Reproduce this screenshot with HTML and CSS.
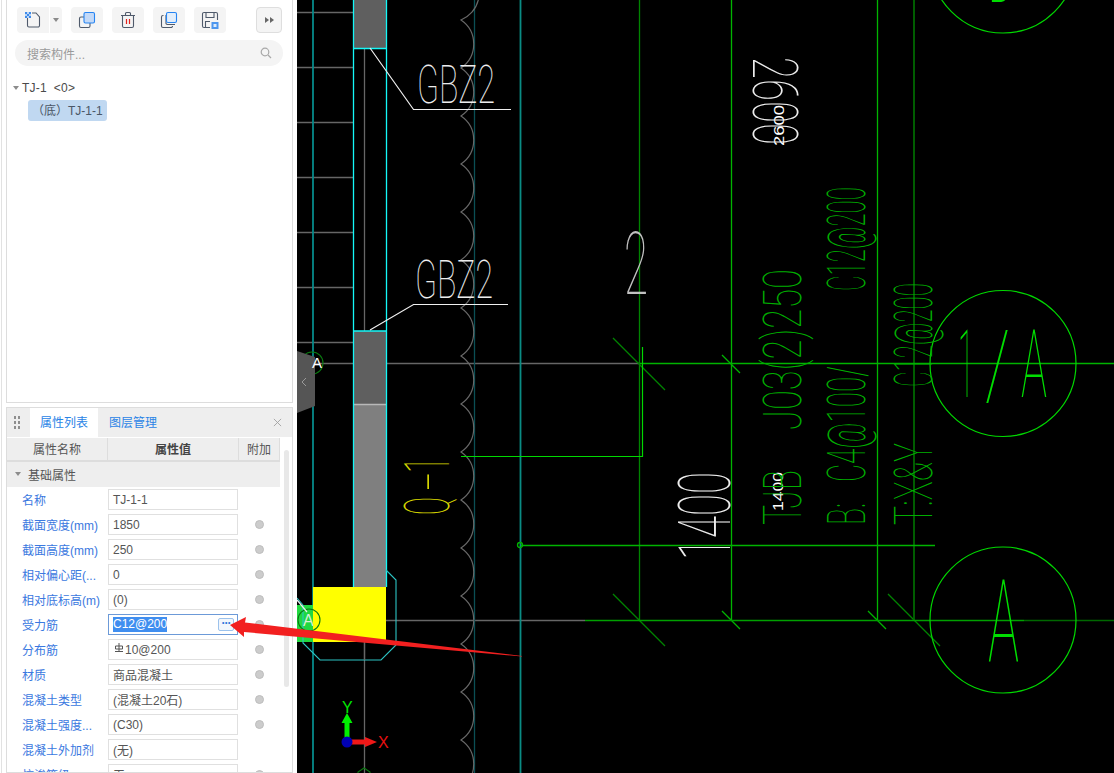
FILE: index.html
```html
<!DOCTYPE html>
<html lang="zh">
<head>
<meta charset="utf-8">
<title>构件属性</title>
<link rel="stylesheet" href="styles.css">
</head>
<body>
<div class="app">
  <aside class="side">
    <div class="frame">
      <section class="tree-panel">
        <div class="toolbar">
          <div class="split">
            <button class="tool tool-main" title="新建">
              <svg class="ico" viewBox="0 0 18 18"><path class="i-dark" d="M3.500 5v9.500a1.500 1.500 0 0 0 1.500 1.500h9a1.500 1.500 0 0 0 1.500-1.500V6L12 2H8"/><path class="i-check" d="M1 1h2v2H1zM5 1h2v2H5zM3 3h2v2H3zM1 5h2v2H1zM5 5h2v2H5z"/><path class="i-checklite" d="M3 1h2v2H3zM1 3h2v2H1zM5 3h2v2H5zM3 5h2v2H3z"/></svg>
            </button>
            <button class="tool tool-drop"><span class="caret-down"></span></button>
          </div>
          <button class="tool"><svg class="ico" viewBox="0 0 18 18"><path class="i-dark" d="M6 6H3a1.500 1.500 0 0 0-1.500 1.500V15A1.500 1.500 0 0 0 3 16.500h7.500A1.500 1.500 0 0 0 12 15v-3"/><rect class="i-blue" x="6" y="1.500" width="10.500" height="10.500" rx="1.500"/></svg></button>
          <button class="tool"><svg class="ico" viewBox="0 0 18 18"><path class="i-dark" d="M2 4.500h14M6.500 4.500V2.500a1 1 0 0 1 1-1h3a1 1 0 0 1 1 1v2M3.500 4.500V15A1.500 1.500 0 0 0 5 16.500h8a1.500 1.500 0 0 0 1.500-1.500V4.500"/><path class="i-red" d="M7.500 8v5M10.500 8v5"/></svg></button>
          <button class="tool"><svg class="ico" viewBox="0 0 18 18"><path class="i-dark" d="M3.500 4.500H3A1.500 1.500 0 0 0 1.500 6v9A1.500 1.500 0 0 0 3 16.500h8A1.500 1.500 0 0 0 12.500 15M6 4v7.500A1.500 1.500 0 0 0 7.500 13.500H15"/><rect class="i-pale" x="6.500" y="1.500" width="10" height="10" rx="1.500"/></svg></button>
          <button class="tool"><svg class="ico" viewBox="0 0 18 18"><path class="i-dark" d="M9 16.500H3A1.500 1.500 0 0 1 1.500 15V3A1.500 1.500 0 0 1 3 1.500h12A1.500 1.500 0 0 1 16.500 3v6M5 2v4.500h8V2M4.500 16V10.500H9"/><rect class="i-fillblue" x="10.500" y="11" width="7" height="7"/><rect class="i-white" x="12.500" y="13" width="3" height="3"/></svg></button>
          <button class="tool tool-more"><span class="tri"></span><span class="tri"></span></button>
        </div>
        <div class="search">
          <span class="search-text">搜索构件...</span>
          <svg class="search-ico" viewBox="0 0 12 12"><circle cx="5" cy="5" r="3.800"/><path d="M8 8l3 3"/></svg>
        </div>
        <div class="tree">
          <div class="tree-root"><span class="caret-small"></span><span>TJ-1&nbsp;&nbsp;&lt;0&gt;</span></div>
          <div class="tree-leaf">（底）TJ-1-1</div>
        </div>
      </section>

      <section class="prop-panel">
        <header class="prop-head">
          <span class="grip"></span>
          <span class="tab tab-on">属性列表</span>
          <span class="tab">图层管理</span>
          <svg class="close" viewBox="0 0 10 10"><path d="M1 1l8 8M9 1l-8 8"/></svg>
        </header>
        <div class="prop-body">
          <div class="prop-table">
            <div class="t-head">
              <span>属性名称</span><span class="t-strong">属性值</span><span>附加</span>
            </div>
            <div class="t-group"><span class="caret-small"></span>基础属性</div>
            <div class="t-row"><span class="t-label">名称</span><span class="t-input">TJ-1-1</span><span></span></div>
            <div class="t-row"><span class="t-label">截面宽度(mm)</span><span class="t-input">1850</span><span class="dot"></span></div>
            <div class="t-row"><span class="t-label">截面高度(mm)</span><span class="t-input">250</span><span class="dot"></span></div>
            <div class="t-row"><span class="t-label">相对偏心距(...</span><span class="t-input">0</span><span class="dot"></span></div>
            <div class="t-row"><span class="t-label">相对底标高(m)</span><span class="t-input">(0)</span><span class="dot"></span></div>
            <div class="t-row"><span class="t-label">受力筋</span><span class="t-input t-focus"><span class="sel">C12@200</span><span class="more-btn">···</span></span><span class="dot"></span></div>
            <div class="t-row"><span class="t-label">分布筋</span><span class="t-input"><svg class="rebar" viewBox="0 0 10 10"><path d="M1.500 3h7v3h-7zM5 0v8M1 8.500h8"/></svg>10@200</span><span class="dot"></span></div>
            <div class="t-row"><span class="t-label">材质</span><span class="t-input">商品混凝土</span><span class="dot"></span></div>
            <div class="t-row"><span class="t-label">混凝土类型</span><span class="t-input">(混凝土20石)</span><span class="dot"></span></div>
            <div class="t-row"><span class="t-label">混凝土强度...</span><span class="t-input">(C30)</span><span class="dot"></span></div>
            <div class="t-row"><span class="t-label">混凝土外加剂</span><span class="t-input">(无)</span><span></span></div>
            <div class="t-row"><span class="t-label">抗渗等级</span><span class="t-input">无</span><span class="dot"></span></div>
          </div>
          <div class="scrollbar"></div>
        </div>
      </section>
    </div>
  </aside>

  <main class="canvas">
    <svg class="drawing" viewBox="297 0 817 773" width="817" height="773">
      <path class="s-grey" d="M297 12.500H353M297 67.500H353M297 122.500H353M297 177.500H353M297 232.500H353M297 287.500H353M297 342.500H353"/>
      <path class="s-grey" d="M364.500 48V331M364.500 642V773M297 363.500H640M297 620.500H585"/>
      <path class="s-teal" d="M313 0V773"/>
      <path class="s-teal2" d="M520.500 0V773"/>
      <path class="s-dteal" d="M474.500 0V773"/>
      <path class="s-cloud" d="M470 -28A29 29 0 0 1 461 20A29 29 0 0 1 461 68A29 29 0 0 1 461 116A29 29 0 0 1 461 164A29 29 0 0 1 461 212A29 29 0 0 1 461 260A29 29 0 0 1 461 308A29 29 0 0 1 461 356A29 29 0 0 1 461 404A29 29 0 0 1 461 452A29 29 0 0 1 461 500A29 29 0 0 1 461 548A29 29 0 0 1 461 596A29 29 0 0 1 461 644A29 29 0 0 1 461 692A29 29 0 0 1 461 740A29 29 0 0 1 461 788"/>
      <rect class="f-col" x="354" y="0" width="32" height="48"/>
      <rect class="f-col" x="354" y="331" width="32" height="73"/>
      <rect class="f-col2" x="354" y="404" width="32" height="183"/>
      <path class="s-lite" d="M354 404.500H386"/>
      <path class="s-cyan" d="M353.500 0V587M386.500 0V587M354 48.500H386M354 331H386"/>
      <circle class="s-dgreen" cx="312" cy="363" r="11"/>
      <rect class="f-green" x="297" y="605" width="16" height="37"/>
      <rect class="f-yellow" x="313" y="587" width="73" height="55"/>
      <path class="s-thincyan" d="M386 570L396 580V645L381 660H320L303 643V630M297 598L303 605M303 605V642"/>
      <path class="s-grey" d="M364.500 642V660"/>
      <circle class="s-dgreen" cx="309" cy="620" r="11"/>
      <path class="s-white" d="M297 600L307 612"/>
      <text class="cad-ui" x="303" y="626" font-size="16">A</text>
      <path class="s-white" d="M370 48L413.500 109.500H511M370 330L413.500 304.500H508"/>
      <text class="cad c-white" x="417" y="103" font-size="53" textLength="78" lengthAdjust="spacingAndGlyphs">GBZ2</text>
      <text class="cad c-white" x="415" y="298" font-size="53" textLength="78" lengthAdjust="spacingAndGlyphs">GBZ2</text>
      <path class="s-g1" d="M639.500 0V620M613 338L665 390M613 594L665 646M888 594L940 646"/>
      <path class="s-g2" d="M731.500 0V620M877.500 0V620M722 355L740 373M722 611L740 629M868 611L886 629"/>
      <path class="s-g3" d="M914 0V620"/>
      <path class="s-g2" d="M640 363.500H1114M521 545.500H935"/>
      <path class="s-g4" d="M585 620.500H1024"/>
      <path class="s-g5" d="M1024 620.500H1114"/>
      <path class="s-g6" d="M642.500 347V456.500H461"/>
      <circle class="s-g2" cx="520" cy="545" r="2.500"/>
      <circle class="s-g6" cx="1003" cy="-40" r="73"/>
      <circle class="s-g6" cx="1003" cy="363.500" r="73"/>
      <circle class="s-g6" cx="1003" cy="620" r="73"/>
      <path class="s-dgreen" d="M358 773V772L364 768L370 772V773"/>
      <text class="cad c-lg" x="988" y="2" font-size="94" textLength="24" lengthAdjust="spacingAndGlyphs">B</text>
      <text class="cad c-lg" x="958" y="397" font-size="94" textLength="16" lengthAdjust="spacingAndGlyphs">1</text>
      <text class="cad c-lg" x="985" y="397" font-size="94" textLength="25" lengthAdjust="spacingAndGlyphs">/</text>
      <text class="cad c-lg" x="1021" y="397" font-size="94" textLength="26" lengthAdjust="spacingAndGlyphs">A</text>
      <text class="cad c-lg" x="988" y="661" font-size="115" textLength="31" lengthAdjust="spacingAndGlyphs">A</text>
      <text class="cad c-grey" x="624" y="294" font-size="88" textLength="24" lengthAdjust="spacingAndGlyphs">2</text>
      <text class="cad c-white" transform="translate(753 57) rotate(90)" font-size="63" textLength="88" lengthAdjust="spacingAndGlyphs">2600</text>
      <text class="cad-small" transform="translate(784 146) rotate(-90)" font-size="14" textLength="41" lengthAdjust="spacingAndGlyphs">2600</text>
      <text class="cad-small" transform="translate(783 511) rotate(-90)" font-size="14" textLength="39" lengthAdjust="spacingAndGlyphs">1400</text>
      <text class="cad c-white" transform="translate(730 560) rotate(-90)" font-size="73" textLength="88" lengthAdjust="spacingAndGlyphs">1400</text>
      <text class="cad c-yellow" transform="translate(449 473) rotate(-90)" font-size="63" textLength="16" lengthAdjust="spacingAndGlyphs">1</text>
      <text class="cad c-yellow" transform="translate(449 491) rotate(-90)" font-size="63" textLength="19" lengthAdjust="spacingAndGlyphs">-</text>
      <text class="cad c-yellow" transform="translate(449 515) rotate(-90)" font-size="63" textLength="18" lengthAdjust="spacingAndGlyphs">Q</text>
      <text class="cad c-green" transform="translate(801 525) rotate(-90)" font-size="53" textLength="55" lengthAdjust="spacingAndGlyphs">TJB</text>
      <text class="cad c-green" transform="translate(801 430) rotate(-90)" font-size="53" textLength="161" lengthAdjust="spacingAndGlyphs">J03(2)250</text>
      <text class="cad c-green" transform="translate(865 525) rotate(-90)" font-size="53" textLength="22" lengthAdjust="spacingAndGlyphs">B:</text>
      <text class="cad c-green" transform="translate(865 482) rotate(-90)" font-size="53" textLength="116" lengthAdjust="spacingAndGlyphs">C4@100/</text>
      <text class="cad c-green" transform="translate(865 291) rotate(-90)" font-size="53" textLength="104" lengthAdjust="spacingAndGlyphs">C12@200</text>
      <text class="cad c-green" transform="translate(932 525) rotate(-90)" font-size="53" textLength="82" lengthAdjust="spacingAndGlyphs">T:X&amp;Y</text>
      <text class="cad c-green" transform="translate(932 387) rotate(-90)" font-size="53" textLength="104" lengthAdjust="spacingAndGlyphs">C12@200</text>
      <path class="f-axg" d="M344.500 742V723H341.500L347 713L352.500 723H349.500V742Z"/>
      <path class="f-axr" d="M347 739.500H365V737L377 742L365 747V744.500H347Z"/>
      <circle class="f-axb" cx="347" cy="742" r="5.500"/>
      <text class="axis-y" x="342" y="713" font-size="16">Y</text>
      <text class="axis-x" x="378" y="748" font-size="16">X</text>
    </svg>
    <svg class="collapse" viewBox="0 0 19 62" width="19" height="62">
      <path class="f-tab" d="M0 0L18 6V55L0 62Z"/>
      <path class="s-tab" d="M9 27L5 31L9 35"/>
    </svg>
    <span class="a-mark">A</span>
  </main>

  <svg class="pointer" viewBox="0 0 300 40" width="300" height="40">
    <path d="M1 6L17 -2L16 3.500L293 37L293 37.500L15 13L15 18Z" class="f-arrow"/>
  </svg>
</div>
</body>
</html>
```

FILE: styles.css
```css
* { box-sizing: border-box; }
html, body { margin: 0; padding: 0; background: #fff; }
body { font-family: "Liberation Sans", "Noto Sans CJK SC", sans-serif; font-size: 12px; color: #444; }
button { font: inherit; border: 0; padding: 0; cursor: pointer; }

.app { position: relative; display: flex; width: 1114px; height: 773px; overflow: hidden; }
.side { width: 297px; flex: none; height: 100%; padding-left: 1px; background: #fff; }
.frame { height: 100%; border-left: 1px solid #e2e2e2; padding: 0 2px 0 4px; display: flex; flex-direction: column; gap: 4px; width: 294px; }

/* tree panel */
.tree-panel { flex: none; height: 403px; border: 1px solid #ddd; border-top: 0; background: #fff; }
.toolbar { display: flex; align-items: center; gap: 9px; padding: 7px 10px 0 10px; }
.split { display: flex; gap: 1px; }
.tool { width: 32px; height: 26px; background: #f4f4f4; border-radius: 4px; display: flex; align-items: center; justify-content: center; }
.tool-main { border-radius: 4px 0 0 4px; }
.tool-drop { width: 12px; border-radius: 0 4px 4px 0; }
.tool-more { width: 26px; margin-left: auto; border: 1px solid #dedede; gap: 1px; }
.ico { width: 18px; height: 18px; overflow: visible; }
.i-dark { fill: none; stroke: #4f5a6b; stroke-width: 1.100; }
.i-blue { fill: #c3d9f7; stroke: #2584f2; stroke-width: 1.100; }
.i-pale { fill: #e2eefb; stroke: #2584f2; stroke-width: 1.100; }
.i-red { fill: none; stroke: #e3221d; stroke-width: 1.200; }
.i-check { fill: #3f8bea; }
.i-checklite { fill: #b8d4f6; }
.i-fillblue { fill: #4c96ee; }
.i-white { fill: #dcebfb; }
.caret-down { width: 0; height: 0; border: 3.500px solid transparent; border-top: 4px solid #8a8a8a; border-bottom: 0; }
.tri { width: 0; height: 0; border-left: 4px solid #666; border-top: 3px solid transparent; border-bottom: 3px solid transparent; }

.search { display: flex; align-items: center; justify-content: space-between; height: 26px; margin: 7px 9px 0 8px; padding: 0 11px 0 12px; background: #f4f4f4; border-radius: 13px; }
.search-text { color: #9a9a9a; }
.search-ico { width: 12px; height: 12px; fill: none; stroke: #a8a8a8; stroke-width: 1.200; }

.tree { padding-top: 14px; }
.tree-root { display: flex; align-items: center; gap: 3px; height: 16px; padding-left: 6px; color: #4a4a4a; letter-spacing: 0.200px; }
.caret-small { display: inline-block; width: 0; height: 0; border: 3.500px solid transparent; border-top: 4px solid #8c8c8c; border-bottom: 0; }
.tree-leaf { width: 79px; height: 21px; margin: 4px 0 0 21px; padding-left: 4px; line-height: 22px; background: #c0d8f1; border-radius: 3px; color: #4a5666; white-space: nowrap; }

/* property panel */
.prop-panel { flex: 1; min-height: 0; border: 1px solid #ddd; background: #fff; overflow: hidden; }
.prop-head { display: flex; align-items: stretch; height: 29px; background: #eee; padding-left: 23px; }
.grip { position: relative; width: 0; }
.grip::before { content: ""; position: absolute; left: -17px; top: 7px; width: 7px; height: 15px; background: radial-gradient(circle, #8e8e8e 1.300px, transparent 1.500px) 0 0 / 4px 5px; }
.tab { width: 68px; text-align: center; line-height: 30px; color: #2a84e6; }
.tab-on { background: #fff; }
.tab + .tab { width: 68px; margin-left: 1px; }
.close { width: 9px; height: 9px; margin: 10px 10px 0 auto; fill: none; stroke: #a0a0a0; stroke-width: 1; }

.prop-body { display: flex; align-items: flex-start; padding-top: 1px; }
.prop-table { width: 273px; flex: none; }
.t-head, .t-row { display: grid; grid-template-columns: 101px 131px 41px; }
.t-head { height: 24px; background: #eee; border-bottom: 2px solid #ddd; line-height: 24px; text-align: center; color: #555; }
.t-head span { border-right: 1px solid #ddd; }
.t-strong { color: #444; font-weight: 700; }
.t-group { height: 25px; background: #eee; display: flex; align-items: center; gap: 7px; padding: 0 0 1px 8px; color: #555; }
.t-row { height: 25px; align-items: center; }
.t-label { padding-left: 15px; color: #3a78e0; white-space: nowrap; }
.t-input { display: flex; align-items: center; width: 130px; height: 21px; border: 1px solid #e0e0e0; padding-left: 4px; color: #555; background: #fff; white-space: nowrap; }
.t-focus { border-color: #6c9ad8; justify-content: space-between; padding-right: 3px; }
.sel { background: #3f8ef0; color: #fff; height: 15px; line-height: 15px; }
.more-btn { width: 16px; height: 13px; border: 1px solid #9cc2ec; border-radius: 2px; background: #f1f6fc; color: #2f78dc; font-size: 12px; font-weight: 700; line-height: 9px; text-align: center; letter-spacing: -1px; }
.rebar { width: 10px; height: 10px; margin: -4px 1px 0 1px; fill: none; stroke: #555; stroke-width: 1; }
.dot { justify-self: center; width: 9px; height: 9px; border-radius: 50%; background: #ccc; border: 1px solid #bdbdbd; }
.scrollbar { width: 5px; height: 237px; margin: 12px 0 0 4px; background: #e8e8e8; border-radius: 3px; flex: none; }

/* canvas */
.canvas { position: relative; flex: 1; height: 100%; background: #000; overflow: hidden; }
.drawing { display: block; }
.drawing path, .drawing circle { fill: none; }
.drawing .f-axg { fill: #00f000; }
.drawing .f-axr { fill: #f01818; }
.drawing .f-axb { fill: #0000b4; }
.s-grey { stroke: #666; stroke-width: 1.300; }
.s-teal { stroke: #068a8a; stroke-width: 1.800; }
.s-teal2 { stroke: #0a8c84; stroke-width: 1.800; }
.s-dteal { stroke: #0b4f55; stroke-width: 1.300; }
.s-cloud { stroke: #686868; stroke-width: 1.200; }
.s-cyan { stroke: #14f8f8; stroke-width: 1.300; }
.s-thincyan { stroke: #2cc4c4; stroke-width: 1.100; }
.s-lite { stroke: #b8b8b8; stroke-width: 1.500; }
.s-white { stroke: #f0f0f0; stroke-width: 1.200; }
.s-dgreen { stroke: #0a7a10; stroke-width: 1.100; }
.f-col { fill: #5f5f5f; }
.f-col2 { fill: #7f7f7f; }
.f-green { fill: #20d840; }
.f-yellow { fill: #ffff00; }
.s-g1 { stroke: #008400; stroke-width: 1.300; }
.s-g2 { stroke: #00b400; stroke-width: 1.300; }
.s-g3 { stroke: #006800; stroke-width: 1.800; }
.s-g4 { stroke: #00a000; stroke-width: 1.400; }
.s-g5 { stroke: #006800; stroke-width: 1.400; }
.s-g6 { stroke: #00d800; stroke-width: 1.200; }

.cad { font-family: Roboto, "Liberation Sans", sans-serif; font-weight: 100; opacity: 0.99; }
.c-white { fill: #f0f0f0; }
.c-grey { fill: #c4c4c4; }
.c-lg { fill: #00e000; }
.c-green { fill: #00b000; }
.c-yellow { fill: #d8d800; }
.cad-small { font-family: "Liberation Sans", sans-serif; fill: #fff; }
.cad-ui { font-family: "Liberation Sans", sans-serif; fill: #d8f0d8; }
.axis-y { font-family: "Liberation Sans", sans-serif; fill: #00e800; }
.axis-x { font-family: "Liberation Sans", sans-serif; fill: #e81010; }

.collapse { position: absolute; left: 0; top: 351px; display: block; }
.f-tab { fill: #555; }
.s-tab { fill: none; stroke: #9a9a9a; stroke-width: 1; }
.a-mark { position: absolute; left: 15px; top: 354px; color: #fff; font-family: "Liberation Sans", sans-serif; font-size: 15px; line-height: 17px; }

.pointer { position: absolute; left: 229px; top: 619px; overflow: visible; }
.f-arrow { fill: #f22020; }
```
